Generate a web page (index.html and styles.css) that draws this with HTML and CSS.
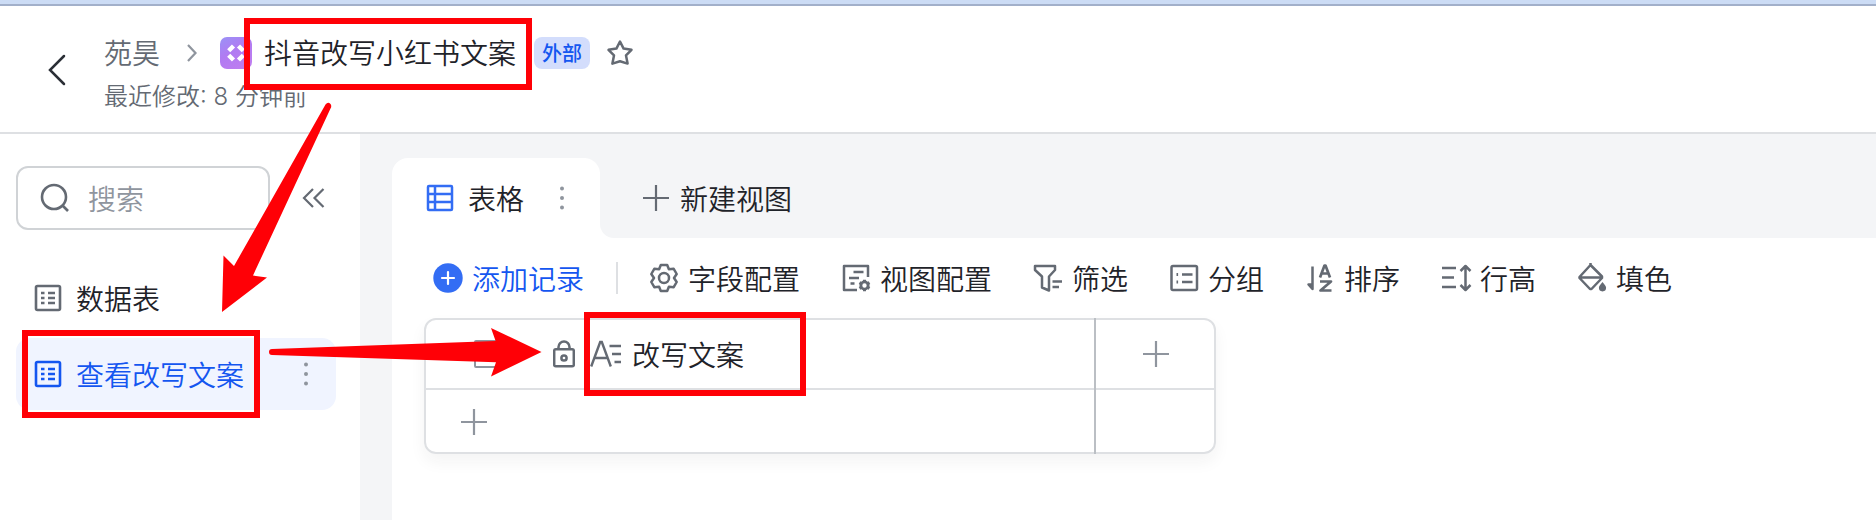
FILE: index.html
```html
<!DOCTYPE html>
<html lang="zh-CN">
<head>
<meta charset="utf-8">
<title>抖音改写小红书文案</title>
<link rel="stylesheet" href="styles.css">
</head>
<body>
<div class="window-strip"></div>
<header class="header">
  <svg class="back" width="20" height="32" viewBox="0 0 20 32"><path d="M17 2 3 16 17 30"/></svg>
  <div class="header-info">
    <div class="crumbs">
      <span class="crumb">苑昊</span>
      <svg class="crumb-sep" width="12" height="20" viewBox="0 0 12 20"><path d="M2 2 9.5 10 2 18"/></svg>
      <svg class="app-logo" width="32" height="32" viewBox="0 0 32 32">
        <defs><linearGradient id="logo" x1="0" y1="0" x2="0.6" y2="1"><stop offset="0" stop-color="#9a92f6"/><stop offset="0.5" stop-color="#b07bf2"/><stop offset="1" stop-color="#bd7df0"/></linearGradient></defs>
        <rect width="32" height="32" rx="7" fill="url(#logo)"/>
        <g stroke="#fff" stroke-width="4.400"><path d="M8.700 13.800 13.500 9M18.500 9 23.300 13.800M23.300 18.200 18.500 23M13.500 23 8.700 18.200"/></g>
      </svg>
      <span class="title">抖音改写小红书文案</span>
      <span class="badge">外部</span>
      <svg class="star" width="28" height="28" viewBox="0 0 28 28"><path d="M14 2.5 17.6 9.6 25.5 10.8 20 16.4 21.6 24.6 14 22.2 6.4 24.6 8 16.4 2.5 10.8 10.4 9.6Z"/></svg>
    </div>
    <div class="modified">最近修改: 8 分钟前</div>
  </div>
</header>
<div class="body">
  <aside class="sidebar">
    <div class="search-row">
      <div class="search">
        <svg width="30" height="30" viewBox="0 0 30 30"><circle cx="14" cy="14" r="12"/><path d="M22.5 22.5 28 28"/></svg>
        <span>搜索</span>
      </div>
      <svg class="collapse" width="24" height="22" viewBox="0 0 24 22"><path d="M12 2 3 11 12 20M22.500 2 13.500 11 22.500 20"/></svg>
    </div>
    <div class="nav">
      <div class="nav-item">
        <svg width="28" height="28" viewBox="0 0 28 28"><rect x="2" y="2" width="24" height="24" rx="1.500"/><path d="M7 9h3.500M14 9h7M7 14h3.500M14 14h7M7 19h3.500M14 19h7"/></svg>
        <span>数据表</span>
      </div>
      <div class="nav-item active">
        <svg width="28" height="28" viewBox="0 0 28 28"><rect x="2" y="2" width="24" height="24" rx="1.500"/><path d="M7 9h3.500M14 9h7M7 14h3.500M14 14h7M7 19h3.500M14 19h7"/></svg>
        <span>查看改写文案</span>
        <svg class="dots" width="6" height="26" viewBox="0 0 6 26"><circle cx="3" cy="3.500" r="2"/><circle cx="3" cy="13" r="2"/><circle cx="3" cy="22.500" r="2"/></svg>
      </div>
    </div>
  </aside>
  <main class="main">
    <div class="tabs">
      <div class="tab">
        <svg class="tab-icon" width="28" height="28" viewBox="0 0 28 28"><rect x="2" y="2" width="24" height="24" rx="1"/><path d="M9 2v24M2 10h24M2 18h24"/></svg>
        <span>表格</span>
        <svg class="dots" width="6" height="26" viewBox="0 0 6 26"><circle cx="3" cy="3.500" r="2"/><circle cx="3" cy="13" r="2"/><circle cx="3" cy="22.500" r="2"/></svg>
      </div>
      <div class="tab-rest">
        <svg class="plus" width="26" height="26" viewBox="0 0 26 26"><path d="M13 0v26M0 13h26"/></svg>
        <span>新建视图</span>
      </div>
    </div>
    <div class="panel">
      <div class="toolbar">
        <div class="add">
          <svg width="30" height="30" viewBox="0 0 30 30"><circle cx="15" cy="15" r="14.700" fill="#336df4"/><path d="M15 9v12M9 15h12" stroke="#fff" stroke-width="2.200" stroke-linecap="round"/></svg>
          <span>添加记录</span>
        </div>
        <div class="divider"></div>
        <div class="tool">
          <svg width="28" height="30" viewBox="0 0 28 30"><path d="M10.800 2h6.400l1.700 4.300 4.800-.5 3 5.200-2.700 4 2.700 4-3 5.200-4.800-.5-1.700 4.300h-6.400l-1.700-4.300-4.800.5-3-5.200 2.700-4-2.700-4 3-5.200 4.800.5z"/><circle cx="14" cy="15" r="5"/></svg>
          <span>字段配置</span>
        </div>
        <div class="tool">
          <svg width="28" height="30" viewBox="0 0 28 30"><path d="M26 14V3H2v24h13M11.500 9h10M7 15h10M8.500 20.500h4"/><circle cx="22.500" cy="22.500" r="3.600" stroke-width="2.800"/><path d="M22.500 16.700v2M22.500 26.300v2M17.500 19.600l1.700 1M25.800 24.400l1.700 1M27.500 19.600l-1.700 1M19.200 24.400l-1.700 1" stroke-width="3"/></svg>
          <span>视图配置</span>
        </div>
        <div class="tool">
          <svg width="28" height="30" viewBox="0 0 28 30"><path d="M1 3h20v4l-6 6.500v14L8 24.500v-11L1 7zM18.500 18.500H28M18.500 24H25"/></svg>
          <span>筛选</span>
        </div>
        <div class="tool">
          <svg width="28" height="30" viewBox="0 0 28 30"><rect x="1.500" y="3" width="25.500" height="24" rx="1.500"/><path d="M12 11.500h10.500M12 19h10.500"/><path d="M6.500 11.500h1.600M6.500 19h1.600" stroke-width="2.800"/></svg>
          <span>分组</span>
        </div>
        <div class="tool">
          <svg width="28" height="30" viewBox="0 0 28 30"><path d="M6.500 3.500V26L2.500 21.500H6.500"/><path d="M14 14.500 18.500 2.500H19.500L24 14.500M15.800 10.500h6.500" stroke-width="2.700"/><path d="M14 18.500h11L14.500 27.500h11" stroke-width="2.700"/></svg>
          <span>排序</span>
        </div>
        <div class="tool">
          <svg width="30" height="30" viewBox="0 0 30 30"><path d="M0 5h14M0 14.500h12M0 24h14M23.500 4v22M18.500 8 23.500 3 28.500 8M18.500 22 23.500 27 28.500 22"/></svg>
          <span>行高</span>
        </div>
        <div class="tool">
          <svg width="28" height="30" viewBox="0 0 28 30"><path d="M12.500 0v3M12.500 2 24 13.500v1.500L13.500 26h-1.500L1.500 15v-1zM2 14.500h22"/><path class="drop" d="M24.500 19c2 2.500 3.600 4 3.600 5.800a3.600 3.600 0 0 1-7.200 0c0-1.800 1.600-3.300 3.600-5.800z"/></svg>
          <span>填色</span>
        </div>
      </div>
      <div class="grid">
        <div class="cell head">
          <span class="checkbox"></span>
          <svg class="lock" width="22" height="28" viewBox="0 0 22 28"><rect x="1.200" y="9.200" width="19.600" height="17" rx="1.500"/><path d="M5.500 9V7a5.500 5.500 0 0 1 11 0v2"/><circle cx="11" cy="18" r="2.600"/></svg>
          <svg class="text-type" width="32" height="28" viewBox="0 0 32 28"><path d="M1.200 26.500 10.200 2h1.600L20.800 26.500M5 18h12.500M19.500 6H31M22 14h9M24.500 22H31"/></svg>
          <span>改写文案</span>
        </div>
        <div class="cell head new-col">
          <svg class="plus" width="26" height="26" viewBox="0 0 26 26"><path d="M13 0v26M0 13h26"/></svg>
        </div>
        <div class="cell new-row">
          <svg class="plus" width="26" height="26" viewBox="0 0 26 26"><path d="M13 0v26M0 13h26"/></svg>
        </div>
        <div class="cell"></div>
        <div class="freeze-line"></div>
      </div>
    </div>
  </main>
</div>
<svg class="annotations" width="1876" height="520" viewBox="0 0 1876 520">
  <g fill="none" stroke="#ff0006" stroke-width="6">
    <rect x="247" y="21" width="282" height="66"/>
    <rect x="25" y="333" width="232" height="82"/>
    <rect x="587" y="315" width="216" height="78"/>
  </g>
  <g fill="#ff0006">
    <path d="M325.500 104.500Q328 101.500 330.500 104 332 106 330.500 108.500L253 275.500 267 277.500 222 312 223.500 255.500 234 266Z"/>
    <path d="M272 349 495.600 341 491 328 541.500 352 491 376.500 496 362.300 272 355A3 3 0 0 1 272 349Z"/>
  </g>
</svg>
</body>
</html>
```
FILE: styles.css
```css
* { box-sizing: border-box; }
body {
  margin: 0;
  width: 1876px;
  height: 520px;
  overflow: hidden;
  display: flex;
  flex-direction: column;
  position: relative;
  background: #fff;
  color: #1f2329;
  font: 350 28px/40px "Noto Sans CJK SC", sans-serif;
}
svg { display: block; flex: none; fill: none; stroke: #646a73; stroke-width: 2.2; }
span { white-space: nowrap; }

.window-strip { flex: none; height: 6px; background: #ccdcf5; border-bottom: 2px solid #a2b0ca; }

.header {
  flex: none;
  height: 128px;
  display: flex;
  align-items: flex-start;
  padding-left: 47px;
  border-bottom: 2px solid #dee0e3;
}
.back { margin-top: 48px; stroke: #2b2f36; stroke-width: 2.5; stroke-linecap: round; }
.header-info { padding: 27px 0 0 37px; }
.crumbs { display: flex; align-items: center; height: 40px; }
.crumb, .title { margin-bottom: 2px; }
.crumb { color: #646a73; }
.crumb-sep { margin-left: 26px; stroke: #8f959e; }
.app-logo { margin-left: 22px; stroke: none; }
.title { margin-left: 12px; }
.badge {
  margin-left: 18px;
  width: 56px;
  height: 32px;
  border-radius: 8px;
  background: #d3ddfc;
  color: #1456f0;
  font-size: 20px;
  font-weight: 500;
  line-height: 31px;
  text-align: center;
}
.star { margin-left: 16px; stroke-width: 2.5; stroke-linejoin: round; }
.modified { margin-top: 6px; height: 36px; line-height: 36px; font-family: Inter, "Noto Sans CJK SC", sans-serif; font-size: 24px; color: #646a73; }

.body { flex: 1; display: flex; min-height: 0; }
.sidebar { flex: none; width: 360px; padding: 32px 24px 0 16px; }
.search-row { display: flex; align-items: center; }
.search {
  width: 254px;
  height: 64px;
  display: flex;
  align-items: center;
  gap: 18px;
  padding-left: 22px;
  border: 2px solid #d0d3d6;
  border-radius: 12px;
  color: #8f959e;
}
.search svg { stroke-width: 2.6; }
.collapse { margin-left: 31px; }
.nav { margin-top: 32px; display: flex; flex-direction: column; gap: 4px; }
.nav-item { height: 72px; display: flex; align-items: center; gap: 14px; padding-left: 18px; border-radius: 14px; }
.nav-item svg { stroke-width: 2.6; }
.nav-item.active { background: #f0f4ff; color: #1456f0; }
.nav-item.active svg { stroke: #1456f0; }
.nav-item .dots { margin: 0 27px 0 auto; }
.dots, .nav-item.active .dots { fill: #8f959e; stroke: none; }

.main { flex: 1; display: flex; flex-direction: column; padding: 24px 0 0 32px; background: #f4f5f7; }
.tabs { flex: none; height: 80px; display: flex; background: #fff; border-top-left-radius: 16px; }
.tab { width: 208px; display: flex; align-items: center; padding-left: 34px; }
.tab-icon { stroke: #336df4; stroke-width: 2.5; }
.tab span { margin-left: 14px; }
.tab .dots { margin-left: 35px; }
.tab-rest {
  flex: 1;
  display: flex;
  align-items: center;
  gap: 11px;
  padding-left: 43px;
  background: #f4f5f7;
  border-bottom-left-radius: 14px;
  position: relative;
}
.tab-rest::before {
  content: "";
  position: absolute;
  top: 0;
  left: -16px;
  width: 16px;
  height: 16px;
  background: radial-gradient(circle at 0 100%, transparent 15.5px, #f4f5f7 16.5px);
}

.panel { flex: 1; padding: 20px 0 0 32px; background: #fff; }
.toolbar { display: flex; align-items: center; height: 40px; padding-left: 9px; }
.add { display: flex; align-items: center; gap: 9px; color: #1456f0; }
.add svg { stroke: none; }
.divider { width: 2px; height: 32px; margin: 0 -10px 0 32px; background: #dee0e3; }
.tool { display: flex; align-items: center; margin-left: 42px; }
.tool svg { width: 30px; margin-right: 8px; stroke-width: 2.5; stroke-linejoin: round; overflow: visible; }
.tool svg[width="28"] { width: 28px; margin-right: 10px; }
.tool .drop { fill: #646a73; stroke: none; }

.grid {
  position: relative;
  margin-top: 20px;
  width: 792px;
  height: 136px;
  display: grid;
  grid-template: 70px 62px / 670px 118px;
  border: 2px solid #dee0e3;
  border-radius: 12px;
  box-shadow: 0 8px 16px rgba(31, 35, 41, .05);
}
.cell { display: flex; align-items: center; }
.head { border-bottom: 2px solid #dee0e3; padding-left: 48px; }
.checkbox { width: 28px; height: 28px; border: 2px solid #8f959e; border-radius: 2px; }
.lock { margin-left: 51px; stroke-width: 2.5; }
.text-type { margin: 0 10px 0 15px; stroke-width: 2.4; }
.new-col { padding: 0 0 0 47px; }
.new-row { padding: 2px 0 0 35px; }
.cell .plus { stroke: #8f959e; }
.freeze-line { position: absolute; left: 668px; top: -2px; width: 2px; height: 136px; background: #bbbfc4; }

.annotations { position: absolute; left: 0; top: 0; stroke: none; }
```
